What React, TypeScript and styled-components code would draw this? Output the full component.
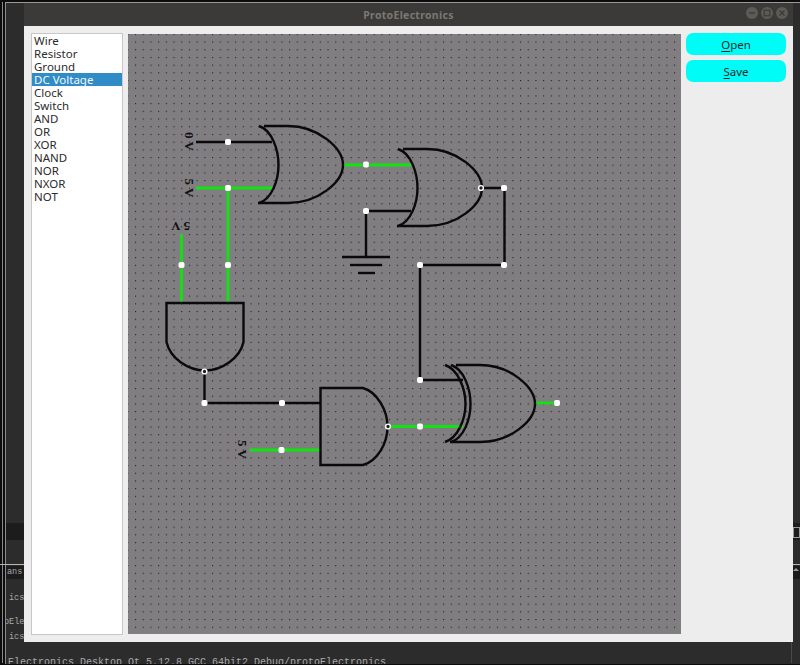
import React from "react";
import styled, { createGlobalStyle } from "styled-components";

const GlobalStyle = createGlobalStyle`
  html, body {
    margin: 0;
    padding: 0;
    background: #0c0c0c;
  }
`;

const Screen = styled.div`
  position: relative;
  width: 800px;
  height: 665px;
  overflow: hidden;
  background: #0c0c0c;
  font-family: "Noto Sans", "Open Sans", sans-serif;
`;

/* the terminal + IDE that sit behind the app window */
const Backdrop = styled.div`
  height: 661px;
  margin: 2px 0 0 2px;
  padding-left: 2px;
  border-left: 1px solid #8a8a8a;
  background: #0c0c0c;
`;

const BackdropInner = styled.div`
  height: 100%;
  border-left: 1px solid #8c8c8c;
  border-top: 1px solid #9a9a9a;
  background: #2d2c2d;
  display: flex;
  flex-direction: column;
  overflow: hidden;
`;

const Band = styled.div<{ $h: number; $dark?: boolean; $line?: boolean }>`
  flex: none;
  height: ${(p) => p.$h}px;
  background: ${(p) => (p.$dark ? "#1d1c1d" : "transparent")};
  border-top: ${(p) => (p.$line ? "1px solid #b5b5b5" : "none")};
`;

const TermLine = styled.div<{ $h: number; $size?: number; $dark?: boolean; $indent?: number }>`
  flex: none;
  height: ${(p) => p.$h}px;
  line-height: ${(p) => p.$h}px;
  text-indent: ${(p) => p.$indent || 0}px;
  font-family: "Liberation Mono", monospace;
  font-size: ${(p) => p.$size || 8.5}px;
  color: #a9a9a9;
  white-space: nowrap;
  background: ${(p) => (p.$dark ? "#1d1c1d" : "transparent")};
`;

const PaneDivider = styled.div`
  position: absolute;
  left: 0;
  top: 564px;
  width: 6px;
  height: 1px;
  background: #b5b5b5;
`;

const RightEdgeLine = styled.div`
  position: absolute;
  left: 791px;
  top: 642px;
  width: 1px;
  height: 21px;
  background: #4a4a4a;
`;

const EdgeGlyph = styled.div`
  position: absolute;
  left: 793px;
  top: 527px;
  width: 5px;
  height: 9px;
  border: 1px solid #9a9a9a;
`;

const EdgeArrow = styled.div`
  position: absolute;
  left: 793px;
  top: 568px;
  border-left: 3px solid transparent;
  border-right: 3px solid transparent;
  border-bottom: 3px solid #9a9a9a;
`;

const Window = styled.div`
  position: absolute;
  left: 24px;
  top: 3px;
  width: 769px;
  height: 639px;
  display: flex;
  flex-direction: column;
  background: #eeedee;
`;

const TitleBar = styled.div`
  flex: none;
  height: 23px;
  position: relative;
  display: flex;
  align-items: center;
  justify-content: center;
  background: #3b3a38;
`;

const Title = styled.div`
  font-size: 10.5px;
  font-weight: 700;
  letter-spacing: 0.3px;
  color: #7a7875;
`;

const WinButtons = styled.div`
  position: absolute;
  right: 5px;
  top: 4px;
  display: flex;
  gap: 3px;
`;

const WinButton = styled.div`
  width: 12px;
  height: 12px;
  border-radius: 50%;
  background: #5c5b58;
  display: flex;
  align-items: center;
  justify-content: center;
  color: #3b3a38;
`;

const Body = styled.div`
  flex: 1;
  min-height: 0;
  display: flex;
  gap: 5px;
  padding: 7px;
`;

const List = styled.ul`
  flex: none;
  width: 90px;
  margin: 0;
  padding: 0;
  list-style: none;
  background: #fff;
  border: 1px solid #c9c7c9;
`;

const ListItem = styled.li<{ $selected?: boolean }>`
  height: 13px;
  line-height: 13px;
  padding-left: 2px;
  font-size: 11.5px;
  color: ${(p) => (p.$selected ? "#f4f8fb" : "#2b2b2b")};
  background: ${(p) => (p.$selected ? "#308cc6" : "transparent")};
`;

const CanvasSvg = styled.svg`
  flex: none;
  display: block;
  width: 553px;
  height: 600px;
  margin-top: 1px;
  background: #807e80;
`;

const Side = styled.div`
  flex: none;
  width: 100px;
  display: flex;
  flex-direction: column;
  gap: 5px;
`;

const CyanButton = styled.button`
  height: 22px;
  padding: 0;
  border: none;
  border-radius: 7px;
  background: #00fcf7;
  font-family: inherit;
  font-size: 11.5px;
  color: #1d2a2c;
  u {
    text-underline-offset: 2px;
  }
`;

const Label = styled.text`
  font-family: "Liberation Serif", serif;
  font-weight: 700;
  font-size: 13px;
  fill: #111;
`;

const BLACK = "#0a0a0a";
const GREEN = "#10e310";

const ITEMS = [
  "Wire",
  "Resistor",
  "Ground",
  "DC Voltage",
  "Clock",
  "Switch",
  "AND",
  "OR",
  "XOR",
  "NAND",
  "NOR",
  "NXOR",
  "NOT",
];

// polylines in page coordinates
const BLACK_WIRES = [
  "196,142 272,142",
  "366,211 411,211",
  "366,211 366,257",
  "481,188 504.5,188 504.5,265 420,265 420,380 463,380",
  "204.5,372 204.5,403 320,403",
  "342,257 390,257",
  "350,265 382,265",
  "358,273 375,273",
];

const GREEN_WIRES = [
  "196,188 272,188",
  "228,188 228,303",
  "181.5,234 181.5,303",
  "343,165 411,165",
  "250,450 320,450",
  "388,426.5 463,426.5",
  "535,403 557,403",
];

const NODES: [number, number][] = [
  [228, 142],
  [228, 188],
  [228, 265],
  [181.5, 265],
  [366, 164.5],
  [366, 211],
  [504, 188],
  [504, 265],
  [420, 265],
  [420, 380],
  [420, 426.5],
  [204.5, 403],
  [282, 403],
  [281.5, 450],
  [557, 403],
];

const PINS: [number, number][] = [
  [481, 188],
  [204.5, 371.5],
  [388, 426.5],
];

const OR_BODY =
  "M259 126 C 272 130 278.5 150 278.5 165 C 278.5 180 272 199 259 203 M264 126 H 288 C 318 126 343 148 343 165 C 343 182 318 203 288 203 H 258";
const OR_BACK = "M253 126 C 266 130 273.5 150 273.5 165 C 273.5 180 266 199 253 203";

const Circuit: React.FC = () => (
  <CanvasSvg viewBox="128 34 553 600">
    <defs>
      <pattern id="dots" x="135" y="33.8" width="7.7" height="7.7" patternUnits="userSpaceOnUse">
        <rect width="1.1" height="1.1" fill="#222" />
      </pattern>
    </defs>
    <rect x="128" y="34" width="553" height="600" fill="url(#dots)" />

    <g fill="none" stroke={GREEN} strokeWidth="2.8">
      {GREEN_WIRES.map((w) => (
        <polyline key={w} points={w} />
      ))}
    </g>
    <g fill="none" stroke={BLACK} strokeWidth="2.4">
      {BLACK_WIRES.map((w) => (
        <polyline key={w} points={w} />
      ))}

      <path d={OR_BODY} />
      <path d={OR_BODY} transform="translate(139 23)" />
      <path d={OR_BODY} transform="translate(192 239)" />
      <path d={OR_BACK} transform="translate(192 239)" />

      {/* rotated AND */}
      <path d="M166.5 303 H 243.5 V 342 C 240 358 222 370.5 205 370.5 C 188 370.5 170 358 166.5 342 Z" />
      <path d="M320.5 388 H 363 C 377 392 387.5 410 387.5 426.5 C 387.5 444 377 461 363 465 H 320.5 Z" />
    </g>

    {NODES.map(([x, y]) => (
      <rect key={`${x}-${y}`} x={x - 3} y={y - 3} width="6" height="6" rx="2" fill="#fff" />
    ))}
    {PINS.map(([x, y]) => (
      <circle key={`${x}-${y}`} cx={x} cy={y} r="2.4" fill="#222" stroke="#fff" strokeWidth="1.4" />
    ))}

    <Label transform="translate(185 132) rotate(90)">0 V</Label>
    <Label transform="translate(185 178.5) rotate(90)">5 V</Label>
    <Label transform="translate(190 222) rotate(180)">5 V</Label>
    <Label transform="translate(238 440) rotate(90)">5 V</Label>
  </CanvasSvg>
);

const App: React.FC = () => {
  return (
    <Screen>
      <GlobalStyle />
      <Backdrop>
        <BackdropInner>
          <Band $h={520} />
          <Band $h={17} $dark />
          <Band $h={24} />
          <Band $h={1} $line />
          <TermLine $h={13} $dark $indent={1}>ans'</TermLine>
          <Band $h={12} />
          <TermLine $h={14} $indent={3}>ics-</TermLine>
          <Band $h={10} />
          <TermLine $h={14} $indent={-2}>pEle</TermLine>
          <Band $h={1} />
          <TermLine $h={14} $indent={3}>ics-</TermLine>
          <Band $h={12} />
          <TermLine $h={14} $size={10} $indent={2}>Electronics Desktop Qt 5.12.8 GCC 64bit2 Debug/protoElectronics</TermLine>
        </BackdropInner>
      </Backdrop>
      <PaneDivider />
      <RightEdgeLine />
      <EdgeGlyph />
      <EdgeArrow />

      <Window>
        <TitleBar>
          <Title>ProtoElectronics</Title>
          <WinButtons>
            <WinButton>
              <svg width="8" height="8" viewBox="0 0 8 8">
                <path d="M1 4H7" stroke="currentColor" strokeWidth="1.4" />
              </svg>
            </WinButton>
            <WinButton>
              <svg width="8" height="8" viewBox="0 0 8 8">
                <rect x="1.2" y="1.2" width="5.6" height="5.6" fill="none" stroke="currentColor" strokeWidth="1.2" />
              </svg>
            </WinButton>
            <WinButton>
              <svg width="8" height="8" viewBox="0 0 8 8">
                <path d="M1.5 1.5L6.5 6.5M6.5 1.5L1.5 6.5" stroke="currentColor" strokeWidth="1.2" />
              </svg>
            </WinButton>
          </WinButtons>
        </TitleBar>
        <Body>
          <List>
            {ITEMS.map((item) => (
              <ListItem key={item} $selected={item === "DC Voltage"}>
                {item}
              </ListItem>
            ))}
          </List>
          <Circuit />
          <Side>
            <CyanButton>
              <u>O</u>pen
            </CyanButton>
            <CyanButton>
              <u>S</u>ave
            </CyanButton>
          </Side>
        </Body>
      </Window>
    </Screen>
  );
};

export default App;
